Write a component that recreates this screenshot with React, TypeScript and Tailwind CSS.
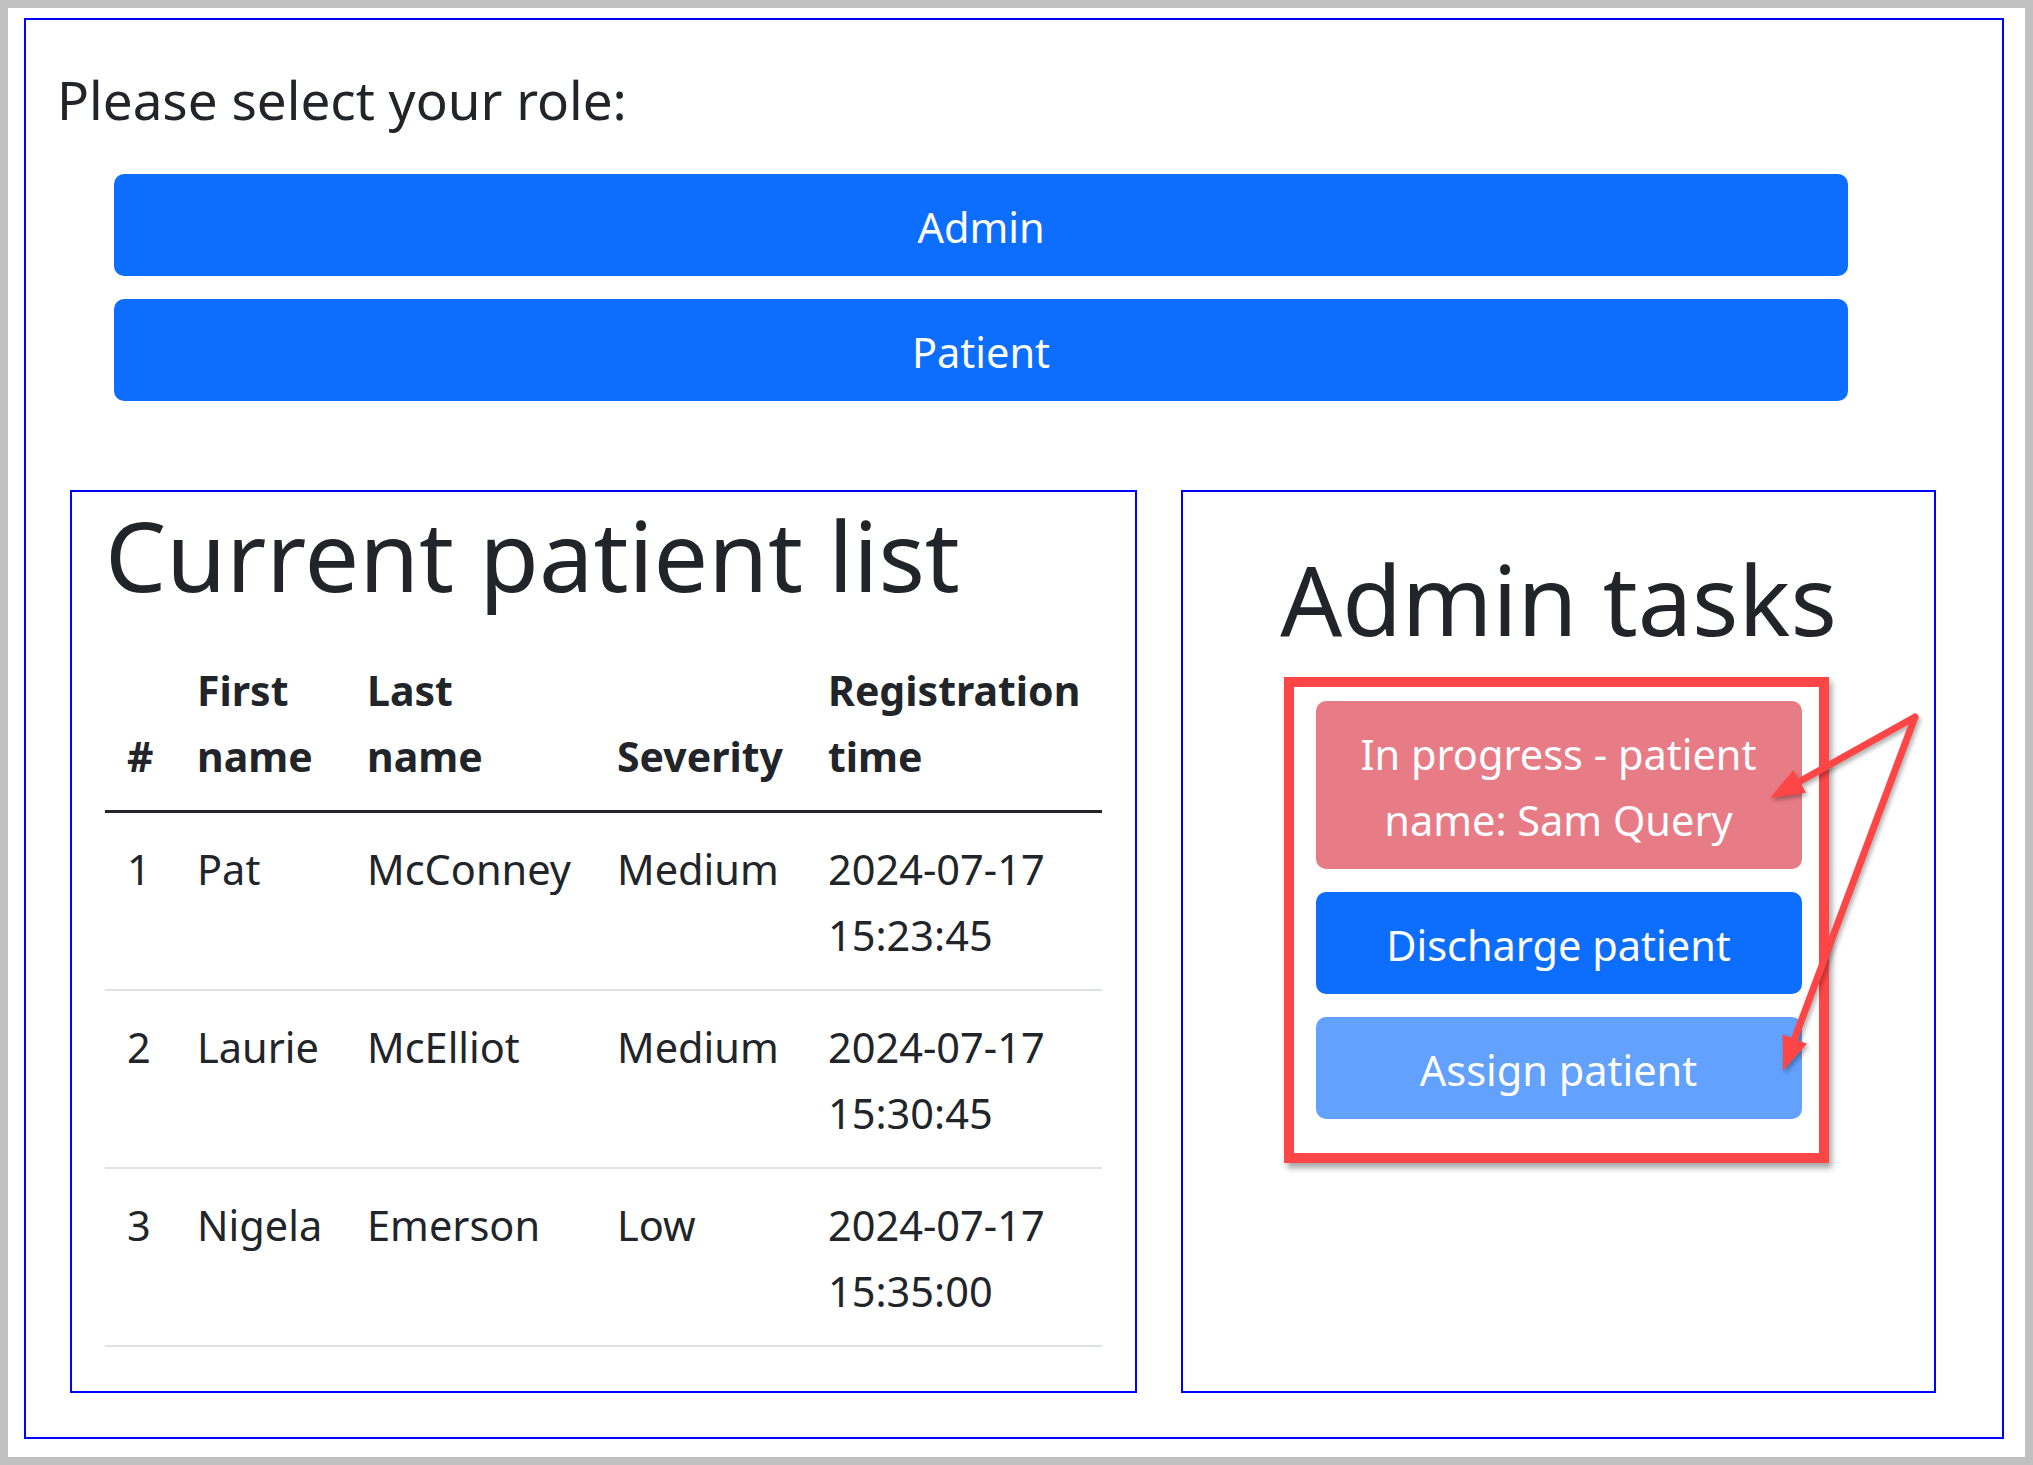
import React from "react";

const patients = [
  { id: 1, first: "Pat", last: "McConney", severity: "Medium", date: "2024-07-17", time: "15:23:45" },
  { id: 2, first: "Laurie", last: "McElliot", severity: "Medium", date: "2024-07-17", time: "15:30:45" },
  { id: 3, first: "Nigela", last: "Emerson", severity: "Low", date: "2024-07-17", time: "15:35:00" },
];

function arrowHead(x1: number, y1: number, x2: number, y2: number, len: number, half: number) {
  const dx = x2 - x1;
  const dy = y2 - y1;
  const d = Math.hypot(dx, dy);
  const ux = dx / d;
  const uy = dy / d;
  const bx = x2 - ux * len;
  const by = y2 - uy * len;
  return `${x2},${y2} ${bx - uy * half},${by + ux * half} ${bx + uy * half},${by - ux * half}`;
}

function Arrows() {
  // page coords, svg placed at (1700, 680)
  const ox = 1700;
  const oy = 680;
  const apex = [1915 - ox, 717 - oy];
  const t1 = [1770 - ox, 798 - oy];
  const t2 = [1783 - ox, 1071 - oy];
  return (
    <svg
      className="pointer-events-none absolute left-[1700px] top-[680px]"
      width="240"
      height="420"
      viewBox="0 0 240 420"
      style={{ filter: "drop-shadow(2px 3px 2px rgba(0,0,0,0.3))" }}
    >
      <polyline
        points={`${t1[0] + 18},${t1[1] - 10} ${apex[0]},${apex[1]} ${t2[0] + 4},${t2[1] - 12}`}
        fill="none"
        stroke="#ff4646"
        strokeWidth="7"
        strokeLinejoin="round"
        strokeLinecap="round"
      />
      <polygon points={arrowHead(apex[0], apex[1], t1[0], t1[1], 34, 13)} fill="#ff4646" />
      <polygon points={arrowHead(apex[0], apex[1], t2[0], t2[1], 34, 13)} fill="#ff4646" />
    </svg>
  );
}

const btn = "h-[102px] rounded-[10px] pt-[4px] text-[41.5px] leading-[66px] text-white";
const cell = "p-[22px] pt-[23px] pb-[21px] text-left";

export default function App() {
  return (
    <div
      className="relative min-h-screen bg-[#c0c0c0] p-2 text-[#212529]"
      style={{ fontFamily: '"Noto Sans", "Open Sans", sans-serif' }}
    >
      <div className="h-[1449px] bg-white pl-[16px] pt-[10px]">
        <div className="h-[1421px] w-[1980px] border-2 border-[#0000ff]">
          <h5 className="ml-[31px] mt-[47px] text-[53px] font-normal leading-[66px]">
            Please select your role:
          </h5>

          <div className="ml-[88px] mt-[41px] flex w-[1734px] flex-col gap-[23px]">
            <button className={`${btn} bg-[#0d6efd]`}>Admin</button>
            <button className={`${btn} bg-[#0d6efd]`}>Patient</button>
          </div>

          <div className="ml-[44px] mt-[89px] flex gap-[44px]">
            <div className="h-[903px] w-[1067px] border-2 border-[#0000ff] px-[33px]">
              <h1 className="mb-[20px] pt-[2px] text-[97px] font-normal leading-[120px]">
                Current patient list
              </h1>
              <table className="w-[997px] table-fixed border-collapse text-[41.5px] leading-[66px]">
                <colgroup>
                  <col className="w-[70px]" />
                  <col className="w-[170px]" />
                  <col className="w-[250px]" />
                  <col className="w-[211px]" />
                  <col className="w-[296px]" />
                </colgroup>
                <thead>
                  <tr className="border-b-[3px] border-[#212529] text-[41px]">
                    <th className={`${cell} align-bottom font-bold`}>#</th>
                    <th className={`${cell} align-bottom font-bold`}>
                      First
                      <br />
                      name
                    </th>
                    <th className={`${cell} align-bottom font-bold`}>
                      Last
                      <br />
                      name
                    </th>
                    <th className={`${cell} align-bottom font-bold`}>Severity</th>
                    <th className={`${cell} align-bottom font-bold`}>
                      Registration
                      <br />
                      time
                    </th>
                  </tr>
                </thead>
                <tbody>
                  {patients.map((p) => (
                    <tr key={p.id} className="border-b-2 border-[#dee2e6]">
                      <td className={`${cell} align-top`}>{p.id}</td>
                      <td className={`${cell} align-top`}>{p.first}</td>
                      <td className={`${cell} align-top`}>{p.last}</td>
                      <td className={`${cell} align-top`}>{p.severity}</td>
                      <td className={`${cell} align-top`}>
                        {p.date}
                        <br />
                        {p.time}
                      </td>
                    </tr>
                  ))}
                </tbody>
              </table>
            </div>

            <div className="flex h-[903px] w-[755px] flex-col items-center border-2 border-[#0000ff]">
              <h1 className="mb-[22px] mt-[46px] text-[97px] font-normal leading-[120px]">
                Admin tasks
              </h1>
              <div className="mt-[21px] flex w-[486px] flex-col gap-[23px]">
                <button className="rounded-[10px] bg-[#e87c86] px-[33px] pb-[16px] pt-[20px] text-[41.5px] leading-[66px] text-white">
                  In progress - patient
                  <br />
                  name: Sam Query
                </button>
                <button className={`${btn} bg-[#0d6efd]`}>Discharge patient</button>
                <button className={`${btn} bg-[#62a1fe]`}>Assign patient</button>
              </div>
            </div>
          </div>
        </div>
      </div>

      {/* annotation overlay */}
      <div className="pointer-events-none absolute left-[1284px] top-[677px] h-[486px] w-[545px] border-[10px] border-[#ff4646] shadow-[3px_5px_6px_rgba(0,0,0,0.35)]" />
      <Arrows />
    </div>
  );
}
